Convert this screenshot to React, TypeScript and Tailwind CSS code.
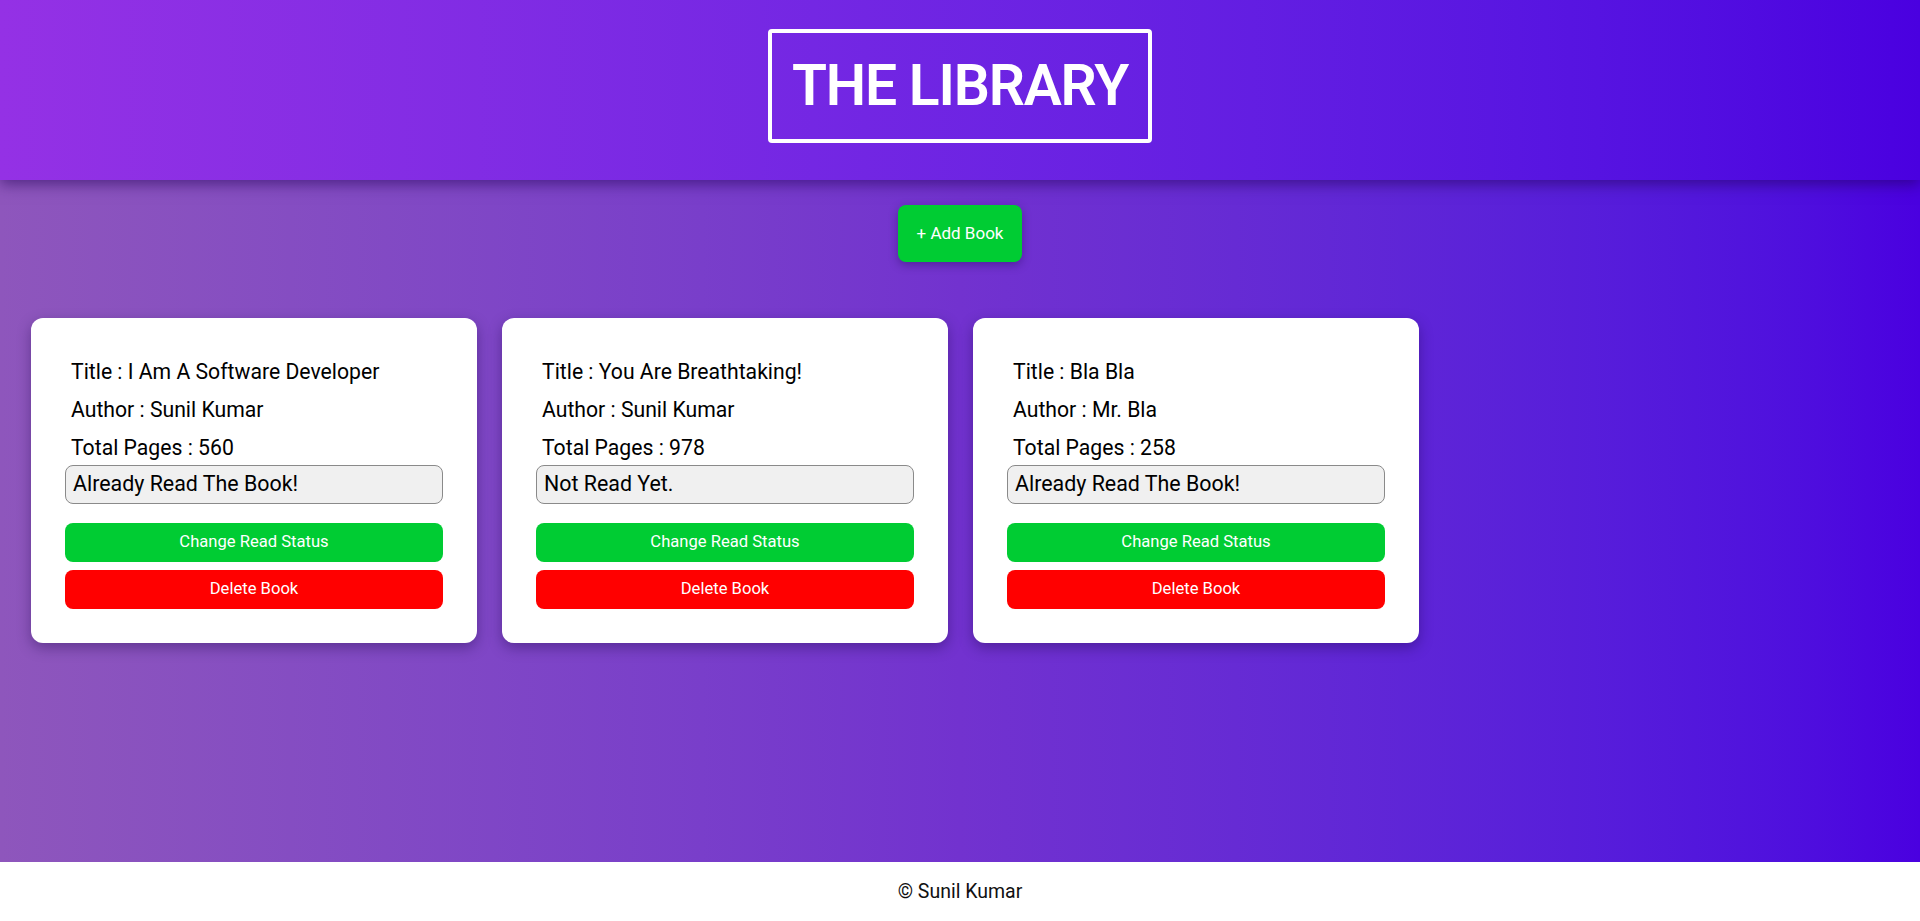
import React from 'react';

interface Book {
  title: string;
  author: string;
  pages: number;
  read: boolean;
}

const books: Book[] = [
  { title: 'I Am A Software Developer', author: 'Sunil Kumar', pages: 560, read: true },
  { title: 'You Are Breathtaking!', author: 'Sunil Kumar', pages: 978, read: false },
  { title: 'Bla Bla', author: 'Mr. Bla', pages: 258, read: true },
];

function BookCard({ book }: { book: Book }) {
  return (
    <div className="w-[446px] rounded-[12px] bg-white px-[34px] pt-[41px] pb-[34px] shadow-[0_5px_14px_rgba(20,0,60,0.35)]">
      <div className="flex flex-col gap-[12px] pl-[6px] text-[21.2px] leading-[26px] text-black">
        <p className="h-[26px]">Title : {book.title}</p>
        <p className="h-[26px]">Author : {book.author}</p>
        <p className="h-[26px]">Total Pages : {book.pages}</p>
      </div>

      {/* read status */}
      <div className="mt-[4px] flex h-[39px] items-center rounded-[8px] border border-[#8a8a8a] bg-[#f0f0f0] pl-[7px] text-[21.4px] text-black">
        {book.read ? 'Already Read The Book!' : 'Not Read Yet.'}
      </div>

      <div className="mt-[19px] flex flex-col gap-[8px]">
        <button className="h-[39px] w-full rounded-[8px] bg-[#00cc33] text-[16.6px] text-white">
          Change Read Status
        </button>
        <button className="h-[39px] w-full rounded-[8px] bg-[#ff0000] text-[16.6px] text-white">
          Delete Book
        </button>
      </div>
    </div>);

}

export default function App() {
  return (
    <div className="flex h-[921px] flex-col font-['Roboto',sans-serif]">
      {/* Header */}
      <header className="relative z-10 flex h-[180px] shrink-0 justify-center bg-gradient-to-r from-[#9431e5] to-[#4a00e0] pt-[29px] shadow-[0_4px_14px_rgba(30,0,80,0.55)]">
        <div className="h-[114px] rounded-[4px] border-4 border-white px-[20px] py-[23px]">
          <h1 className="text-[57px] font-semibold leading-[60px] tracking-[-1.2px] text-white">THE LIBRARY</h1>
        </div>
      </header>

      {/* Main */}
      <main className="flex flex-1 flex-col bg-gradient-to-r from-[#8e56bc] via-[#7232cf] to-[#4a00e0]">
        <div className="flex justify-center pt-[25px]">
          <button className="h-[57px] rounded-[8px] bg-[#00cc33] px-[19px] text-[17px] text-white shadow-[0_3px_10px_rgba(20,0,60,0.35)]">
            + Add Book
          </button>
        </div>

        <div className="mt-[56px] flex gap-[25px] px-[31px]">
          {books.map((b) =>
          <BookCard key={b.title} book={b} />
          )}
        </div>
      </main>

      {/* Footer */}
      <footer className="flex h-[59px] shrink-0 items-center justify-center bg-white text-[19.5px] text-[#111]">
        © Sunil Kumar
      </footer>
    </div>);

}
